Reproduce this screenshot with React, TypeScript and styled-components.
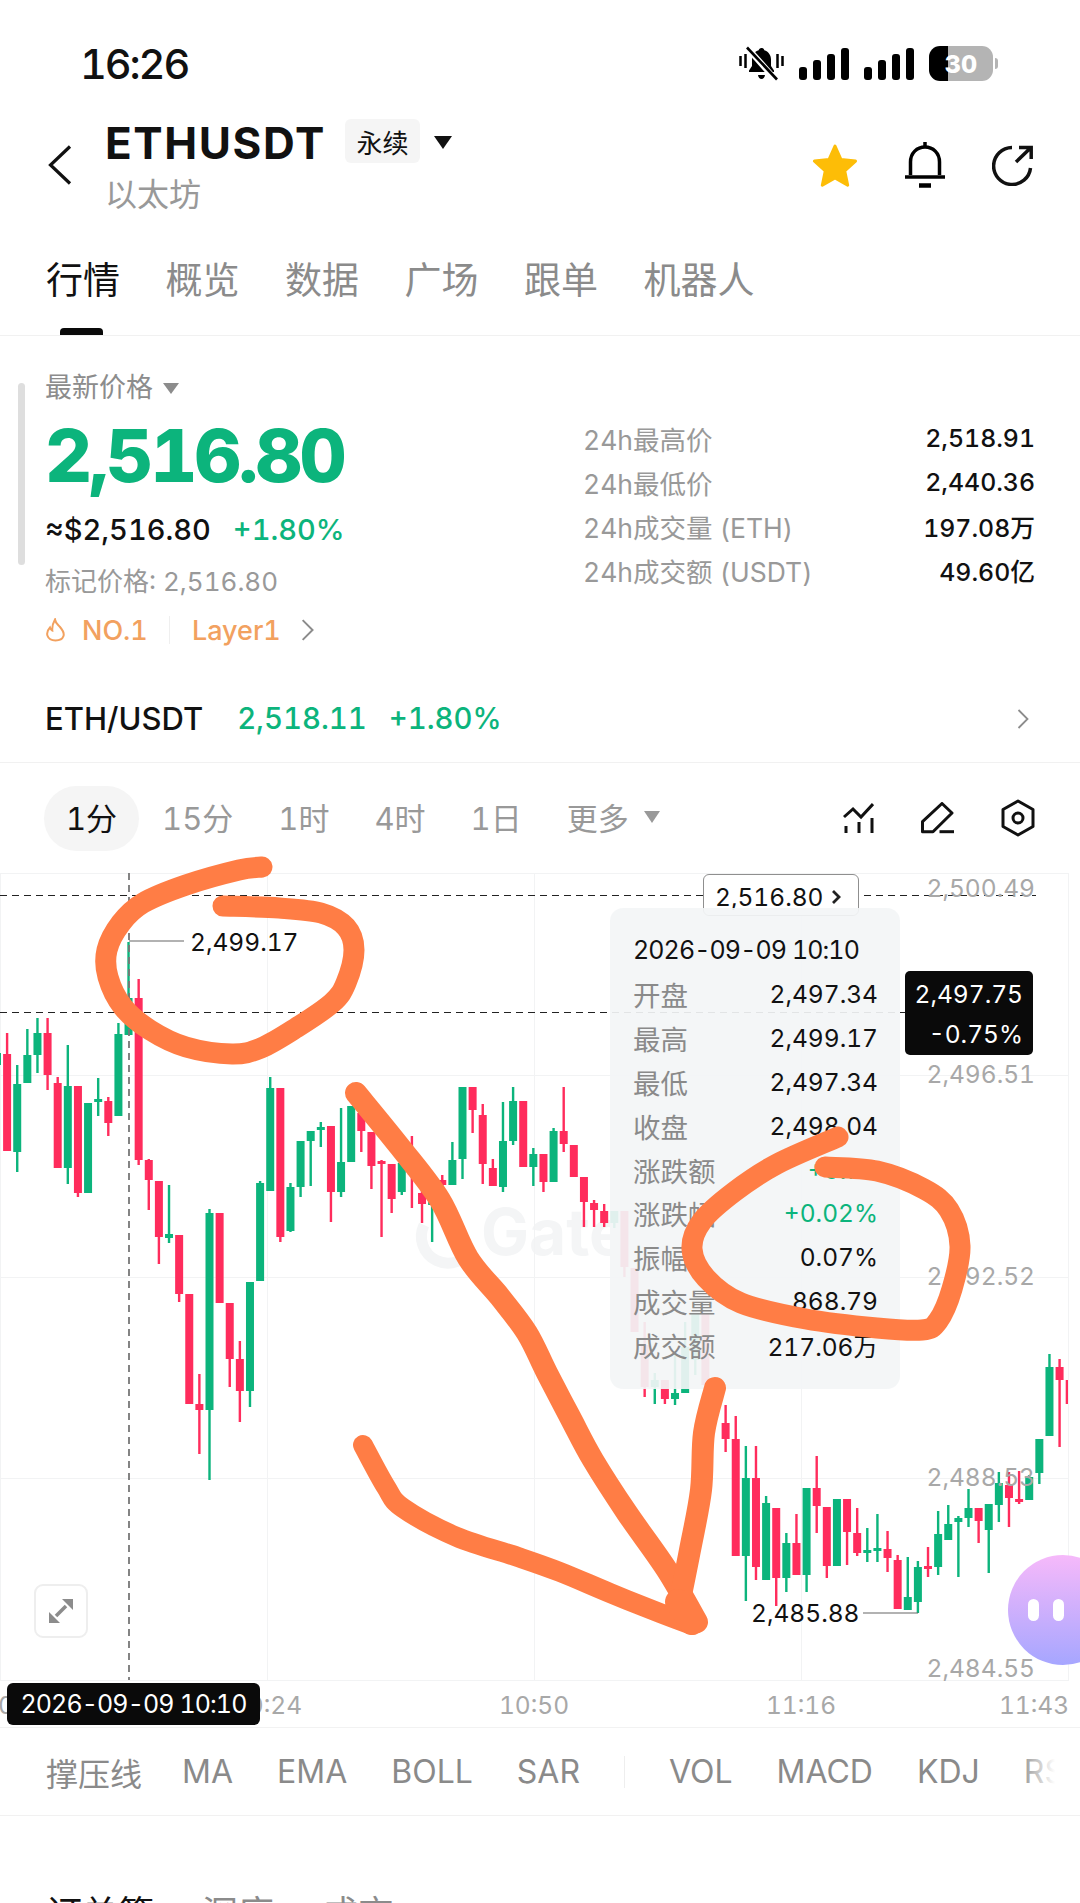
import React from 'react';
import styled, { createGlobalStyle } from 'styled-components';

const GREEN = '#0cb47c';
const RED = '#ff2c5c';
const ORANGE = '#ff7d45';
const FONT = 'Inter, "Noto Sans CJK SC", sans-serif';
const CHART_TOP = 863;

const Global = createGlobalStyle`
  html, body { margin: 0; padding: 0; background: #fff; }
  body { font-family: ${FONT}; color: #111; font-variant-numeric: tabular-nums; }
  * { box-sizing: border-box; }
`;

const Page = styled.div`
  width: 1080px;
  height: 1903px;
  overflow: hidden;
  background: #fff;
  display: flex;
  flex-direction: column;
`;

/* ---------- status bar ---------- */
const StatusBar = styled.div`
  height: 110px;
  flex: none;
  padding: 17px 87px 0 80px;
  display: flex;
  align-items: center;
  justify-content: space-between;
`;
const Clock = styled.div`
  font-size: 41.5px;
  line-height: 44px;
  font-weight: 500;
  letter-spacing: -2.1px;
`;
const StatusIcons = styled.div`
  display: flex;
  align-items: center;
  gap: 15px;
`;
const Battery = styled.div`
  width: 64px;
  height: 35px;
  border-radius: 11px;
  background: linear-gradient(90deg, #000 30%, #b4b4b4 30%);
  color: #fff;
  font-size: 25px;
  font-weight: 800;
  display: flex;
  align-items: center;
  justify-content: center;
  position: relative;
  &::after {
    content: '';
    position: absolute;
    right: -5px;
    top: 12px;
    width: 3px;
    height: 11px;
    border-radius: 0 3px 3px 0;
    background: #b4b4b4;
  }
`;

/* ---------- header ---------- */
const Header = styled.div`
  height: 110px;
  flex: none;
  display: flex;
  align-items: center;
  padding: 0 47px 0 48px;
`;
const TitleCol = styled.div`
  margin-left: 33px;
  display: flex;
  flex-direction: column;
  gap: 13px;
  margin-top: 2px;
`;
const TitleRow = styled.div`
  display: flex;
  align-items: center;
  height: 44px;
`;
const Symbol = styled.div`
  font-size: 44px;
  font-weight: 700;
  line-height: 44px;
  letter-spacing: 1.6px;
`;
const KindTag = styled.div`
  margin: -3px 0 0 19px;
  width: 75px;
  height: 44px;
  border-radius: 6px;
  background: #f5f5f5;
  font-size: 26px;
  display: flex;
  align-items: center;
  justify-content: center;
`;
const Triangle = styled.i<{ $w: number; $h: number; $color: string; $ml: number }>`
  display: block;
  flex: none;
  margin-left: ${p => p.$ml}px;
  width: 0;
  height: 0;
  border-left: ${p => p.$w / 2}px solid transparent;
  border-right: ${p => p.$w / 2}px solid transparent;
  border-top: ${p => p.$h}px solid ${p => p.$color};
`;
const SubTitle = styled.div`
  font-size: 32px;
  line-height: 34px;
  color: #999;
`;
const HeaderActions = styled.div`
  margin-left: auto;
  display: flex;
  align-items: center;
  gap: 47px;
`;

/* ---------- main tabs ---------- */
const TabBar = styled.div`
  height: 116px;
  flex: none;
  display: flex;
  align-items: flex-start;
  gap: 45.5px;
  padding: 42px 0 0 46px;
  border-bottom: 1px solid #f1f1f1;
`;
const Tab = styled.div<{ $active?: boolean }>`
  position: relative;
  font-size: 37px;
  line-height: 37px;
  color: ${p => (p.$active ? '#111' : '#8b8b8b')};
  height: 73px;
  ${p =>
    p.$active &&
    `&::after {
      content: '';
      position: absolute;
      left: 14px;
      bottom: 0;
      width: 43px;
      height: 7px;
      border-radius: 4px 4px 0 0;
      background: #0a0a0a;
    }`}
`;

/* ---------- info ---------- */
const Info = styled.div`
  height: 339px;
  flex: none;
  display: flex;
  position: relative;
  padding-left: 45px;
`;
const ScrollThumb = styled.div`
  position: absolute;
  left: 18px;
  top: 47px;
  width: 7px;
  height: 182px;
  border-radius: 4px;
  background: #dedede;
`;
const PriceCol = styled.div`
  width: 538px;
  flex: none;
  padding-top: 34px;
  display: flex;
  flex-direction: column;
`;
const PriceLabel = styled.div`
  display: flex;
  align-items: center;
  font-size: 27px;
  line-height: 36px;
  color: #8c8c8c;
`;
const BigPrice = styled.div`
  margin-top: 8px;
  font-size: 73px;
  line-height: 84px;
  font-weight: 800;
  letter-spacing: -2.9px;
  color: ${GREEN};
`;
const ApproxRow = styled.div`
  margin-top: 14px;
  display: flex;
  gap: 22px;
  font-size: 29px;
  line-height: 36px;
  font-weight: 500;
`;
const GreenText = styled.span`
  color: ${GREEN};
`;
const MarkPrice = styled.div`
  margin-top: 16px;
  font-size: 26px;
  line-height: 36px;
  color: #999;
`;
const RankRow = styled.div`
  margin-top: 10px;
  height: 40px;
  display: flex;
  align-items: center;
  font-size: 27px;
  font-weight: 500;
  color: #f2a15f;
`;
const RankText = styled.span`
  margin-left: 16px;
`;
const RankDivider = styled.span`
  width: 1px;
  height: 28px;
  margin: 0 22px 0 21px;
  background: #efefef;
`;
const RankChevron = styled.span`
  margin-left: 20px;
  display: flex;
`;
const StatsCol = styled.div`
  flex: 1;
  padding: 80px 45px 0 0;
`;
const StatRow = styled.div`
  height: 44px;
  display: flex;
  align-items: center;
  justify-content: space-between;
  font-size: 26.5px;
`;
const StatLabel = styled.span`
  color: #999;
`;
const StatValue = styled.span`
  color: #111;
  font-size: 24.8px;
  font-weight: 500;
`;

/* ---------- spot row ---------- */
const SpotRow = styled.div`
  height: 88px;
  flex: none;
  display: flex;
  align-items: center;
  gap: 22px;
  padding: 0 51px 0 45px;
  border-bottom: 1px solid #f1f1f1;
  font-size: 29.3px;
  font-weight: 500;
`;
const SpotName = styled.span`
  font-size: 31px;
  margin-right: 12px;
`;
const SpotChevron = styled.span`
  margin-left: auto;
  display: flex;
`;

/* ---------- period bar ---------- */
const PeriodBar = styled.div`
  height: 100px;
  flex: none;
  padding: 10px 45px 0 44px;
  display: flex;
  align-items: center;
  gap: 1px;
`;
const Period = styled.div<{ $active?: boolean }>`
  height: 65px;
  padding: 0 22px 3px;
  display: flex;
  align-items: center;
  font-size: 31px;
  border-radius: 33px;
  background: ${p => (p.$active ? '#f5f5f5' : 'transparent')};
  color: ${p => (p.$active ? '#111' : '#999')};
`;
const ChartTools = styled.div`
  margin-left: auto;
  display: flex;
  align-items: center;
  gap: 47px;
`;

/* ---------- chart ---------- */
const Chart = styled.div`
  height: 865px;
  flex: none;
  position: relative;
  border-bottom: 1px solid #f2f2f2;
`;
const ChartLayer = styled.svg<{ $front?: boolean }>`
  position: absolute;
  left: 0;
  top: 0;
  overflow: visible;
  z-index: ${p => (p.$front ? 5 : 0)};
  pointer-events: none;
`;
const Watermark = styled.div`
  position: absolute;
  left: 481px;
  top: ${1232 - CHART_TOP}px;
  transform: translateY(-50%);
  font-size: 64px;
  font-weight: 700;
  line-height: 64px;
  color: #f4f5f6;
`;
const AxisPrice = styled.div<{ $y: number }>`
  position: absolute;
  right: 45px;
  top: ${p => p.$y - CHART_TOP}px;
  transform: translateY(-50%);
  font-size: 24.5px;
  color: #a8a8a8;
  line-height: 30px;
`;
const AxisTime = styled.div<{ $x: number }>`
  position: absolute;
  left: ${p => p.$x}px;
  top: ${1705 - CHART_TOP}px;
  transform: translate(-50%, -50%);
  font-size: 24.5px;
  color: #a8a8a8;
  line-height: 30px;
`;
const ExtremeLabel = styled.div<{ $x: number; $y: number }>`
  position: absolute;
  left: ${p => p.$x}px;
  top: ${p => p.$y - CHART_TOP}px;
  transform: translateY(-50%);
  font-size: 24.5px;
  line-height: 30px;
  color: #111;
`;
const LastPriceTag = styled.div`
  position: absolute;
  left: 703px;
  top: ${874 - CHART_TOP}px;
  width: 156px;
  height: 42px;
  background: #fff;
  border: 1px solid #8f8f8f;
  border-radius: 6px;
  display: flex;
  align-items: center;
  padding: 3px 0 0 11px;
  gap: 8px;
  font-size: 24.5px;
  line-height: 36px;
  z-index: 1;
`;
const Tooltip = styled.div`
  position: absolute;
  left: 610px;
  top: ${908 - CHART_TOP}px;
  width: 290px;
  height: 481px;
  padding: 21px 22px 0 23px;
  border-radius: 13px;
  background: rgba(243, 245, 246, 0.92);
  z-index: 2;
`;
const TooltipDate = styled.div`
  font-size: 25px;
  line-height: 43px;
  letter-spacing: -0.9px;
  color: #111;
`;
const TooltipRow = styled.div`
  display: flex;
  justify-content: space-between;
  align-items: center;
  height: 43.9px;
  font-size: 24.5px;
`;
const TooltipKey = styled.span`
  color: #8a8a8a;
  font-size: 27.5px;
`;
const TooltipVal = styled.span<{ $green?: boolean }>`
  color: ${p => (p.$green ? GREEN : '#111')};
`;
const CrossPrice = styled.div`
  position: absolute;
  left: 905px;
  top: ${971 - CHART_TOP}px;
  width: 128px;
  height: 84px;
  padding: 3px 10px 0 0;
  border-radius: 5px;
  background: #0a0a0a;
  color: #fff;
  font-size: 24.5px;
  line-height: 40px;
  text-align: right;
  z-index: 3;
`;
const CrossDate = styled.div`
  position: absolute;
  left: 7px;
  top: ${1683 - CHART_TOP}px;
  width: 253px;
  height: 42px;
  border-radius: 6px;
  background: #0a0a0a;
  color: #fff;
  font-size: 25px;
  letter-spacing: -0.9px;
  display: flex;
  align-items: center;
  justify-content: center;
  z-index: 3;
`;
const ExpandButton = styled.div`
  position: absolute;
  left: 34px;
  top: ${1584 - CHART_TOP}px;
  width: 54px;
  height: 54px;
  border: 2px solid #eeeeee;
  border-radius: 9px;
  background: #fff;
  display: flex;
  align-items: center;
  justify-content: center;
`;
const Assistant = styled.div`
  position: absolute;
  left: 1008px;
  top: ${1555 - CHART_TOP}px;
  width: 110px;
  height: 110px;
  border-radius: 50%;
  background: linear-gradient(180deg, #f6b9fa 0%, #a6a6ff 100%);
  display: flex;
  align-items: center;
  gap: 14px;
  padding: 0 0 0 20px;
  z-index: 4;
`;
const AssistantEye = styled.i`
  display: block;
  width: 11px;
  height: 22px;
  border-radius: 6px;
  background: #fff;
`;

/* ---------- indicators ---------- */
const IndicatorBar = styled.div`
  height: 88px;
  flex: none;
  position: relative;
  display: flex;
  align-items: center;
  gap: 44px;
  padding-left: 46px;
  overflow: hidden;
  white-space: nowrap;
  border-bottom: 1px solid #f1f1f1;
  font-size: 32px;
  color: #8a8a8a;
  &::after {
    content: '';
    position: absolute;
    right: 0;
    top: 0;
    bottom: 1px;
    width: 62px;
    background: linear-gradient(90deg, rgba(255, 255, 255, 0), #fff 60%);
  }
`;
const SupportLabel = styled.span`
  margin-right: -4px;
`;
const IndicatorDivider = styled.span`
  flex: none;
  width: 1px;
  height: 32px;
  background: #eeeeee;
`;

/* ---------- depth tabs ---------- */
const DepthTabs = styled.div`
  padding: 79px 0 0 46px;
  display: flex;
  gap: 48px;
  font-size: 36px;
  line-height: 38px;
`;
const DepthTab = styled.span<{ $active?: boolean }>`
  color: ${p => (p.$active ? '#111' : '#8b8b8b')};
`;

/* ---------- data ---------- */
type Candle = [number, number, number, number, 'g' | 'r'];
const CANDLES: Candle[] = [
  [1053, 1053, 1065, 1065, 'g'],
  [1033, 1054, 1151, 1151, 'r'],
  [1065, 1084, 1152, 1172, 'g'],
  [1029, 1055, 1083, 1083, 'g'],
  [1018, 1033, 1055, 1073, 'g'],
  [1018, 1033, 1075, 1090, 'r'],
  [1077, 1083, 1168, 1168, 'r'],
  [1045, 1086, 1168, 1184, 'g'],
  [1086, 1086, 1193, 1197, 'r'],
  [1103, 1103, 1193, 1193, 'g'],
  [1078, 1099, 1102, 1116, 'g'],
  [1097, 1101, 1123, 1136, 'r'],
  [1023, 1034, 1116, 1116, 'g'],
  [942, 998, 1035, 1035, 'g'],
  [979, 998, 1160, 1165, 'r'],
  [1159, 1160, 1180, 1210, 'r'],
  [1181, 1181, 1237, 1264, 'r'],
  [1185, 1234, 1238, 1243, 'g'],
  [1235, 1235, 1294, 1302, 'r'],
  [1294, 1294, 1404, 1404, 'r'],
  [1374, 1404, 1410, 1454, 'r'],
  [1209, 1213, 1410, 1480, 'g'],
  [1213, 1213, 1303, 1303, 'r'],
  [1303, 1303, 1359, 1387, 'r'],
  [1341, 1359, 1391, 1422, 'r'],
  [1282, 1282, 1391, 1407, 'g'],
  [1181, 1183, 1281, 1281, 'g'],
  [1077, 1088, 1191, 1191, 'g'],
  [1088, 1088, 1237, 1242, 'r'],
  [1183, 1187, 1231, 1232, 'g'],
  [1141, 1141, 1187, 1197, 'g'],
  [1131, 1131, 1141, 1186, 'g'],
  [1122, 1127, 1130, 1147, 'g'],
  [1126, 1126, 1192, 1222, 'r'],
  [1108, 1162, 1192, 1197, 'g'],
  [1106, 1106, 1162, 1162, 'g'],
  [1113, 1113, 1131, 1152, 'r'],
  [1132, 1132, 1166, 1189, 'r'],
  [1160, 1161, 1164, 1237, 'r'],
  [1164, 1164, 1199, 1213, 'r'],
  [1135, 1163, 1192, 1195, 'g'],
  [1136, 1165, 1175, 1208, 'r'],
  [1190, 1193, 1204, 1223, 'r'],
  [1190, 1195, 1205, 1242, 'g'],
  [1175, 1180, 1185, 1197, 'r'],
  [1142, 1160, 1185, 1185, 'g'],
  [1087, 1087, 1159, 1179, 'g'],
  [1087, 1087, 1110, 1133, 'r'],
  [1104, 1115, 1164, 1184, 'r'],
  [1159, 1168, 1186, 1186, 'r'],
  [1102, 1141, 1187, 1192, 'g'],
  [1087, 1101, 1141, 1145, 'g'],
  [1101, 1101, 1167, 1167, 'r'],
  [1148, 1154, 1167, 1186, 'g'],
  [1154, 1154, 1182, 1192, 'r'],
  [1128, 1131, 1182, 1182, 'g'],
  [1087, 1131, 1144, 1152, 'r'],
  [1145, 1145, 1177, 1177, 'r'],
  [1177, 1177, 1202, 1227, 'r'],
  [1200, 1203, 1210, 1227, 'r'],
  [1204, 1211, 1223, 1227, 'r'],
  [1211, 1211, 1223, 1228, 'g'],
  [1211, 1211, 1267, 1277, 'r'],
  [1268, 1268, 1332, 1332, 'r'],
  [1322, 1345, 1387, 1397, 'r'],
  [1373, 1380, 1387, 1404, 'g'],
  [1380, 1380, 1399, 1404, 'r'],
  [1353, 1393, 1399, 1405, 'g'],
  [1322, 1347, 1393, 1393, 'g'],
  [1313, 1313, 1360, 1375, 'g'],
  [1313, 1313, 1385, 1385, 'r'],
  [1380, 1385, 1405, 1420, 'r'],
  [1405, 1423, 1439, 1452, 'r'],
  [1416, 1439, 1556, 1556, 'r'],
  [1446, 1478, 1556, 1601, 'g'],
  [1446, 1478, 1567, 1580, 'r'],
  [1496, 1503, 1580, 1580, 'g'],
  [1508, 1508, 1578, 1606, 'r'],
  [1533, 1543, 1578, 1592, 'g'],
  [1514, 1543, 1575, 1575, 'r'],
  [1488, 1488, 1575, 1592, 'g'],
  [1456, 1488, 1506, 1533, 'r'],
  [1507, 1507, 1566, 1578, 'r'],
  [1499, 1499, 1566, 1566, 'g'],
  [1499, 1499, 1532, 1565, 'r'],
  [1508, 1533, 1553, 1556, 'r'],
  [1528, 1550, 1552, 1562, 'g'],
  [1514, 1548, 1550, 1562, 'g'],
  [1531, 1549, 1558, 1572, 'r'],
  [1555, 1560, 1609, 1609, 'r'],
  [1557, 1597, 1610, 1610, 'g'],
  [1561, 1567, 1602, 1613, 'g'],
  [1547, 1566, 1568, 1577, 'r'],
  [1511, 1534, 1567, 1575, 'g'],
  [1505, 1524, 1540, 1540, 'g'],
  [1516, 1518, 1522, 1577, 'g'],
  [1489, 1508, 1518, 1527, 'g'],
  [1508, 1508, 1521, 1543, 'r'],
  [1504, 1504, 1530, 1573, 'g'],
  [1472, 1483, 1505, 1522, 'g'],
  [1472, 1485, 1498, 1527, 'r'],
  [1471, 1499, 1501, 1504, 'r'],
  [1475, 1477, 1500, 1500, 'g'],
  [1439, 1439, 1473, 1484, 'g'],
  [1354, 1367, 1436, 1436, 'g'],
  [1359, 1367, 1380, 1447, 'r'],
  [1373, 1380, 1404, 1416, 'r'],
];

type Pt = [number, number];
const toPath = (pts: Pt[]) => {
  let d = `M${pts[0][0]} ${pts[0][1]}`;
  for (let i = 0; i < pts.length - 1; i++) {
    const p0 = pts[Math.max(0, i - 1)];
    const p1 = pts[i];
    const p2 = pts[i + 1];
    const p3 = pts[Math.min(pts.length - 1, i + 2)];
    const c1x = p1[0] + (p2[0] - p0[0]) / 6;
    const c1y = p1[1] + (p2[1] - p0[1]) / 6;
    const c2x = p2[0] - (p3[0] - p1[0]) / 6;
    const c2y = p2[1] - (p3[1] - p1[1]) / 6;
    d += `C${c1x} ${c1y} ${c2x} ${c2y} ${p2[0]} ${p2[1]}`;
  }
  return d;
};

const CIRCLE_ONE: Pt[] = [[262, 867], [239, 870], [186, 885], [143, 903], [121, 923], [107, 950], [108, 977], [123, 1007], [150, 1030], [186, 1047], [232, 1054], [261, 1048], [296, 1028], [332, 1003], [346, 983], [354, 950], [346, 927], [321, 913], [279, 908], [223, 906]];
const ARROW_SHAFT: Pt[] = [[356, 1093], [400, 1147], [440, 1200], [468, 1258], [500, 1297], [527, 1333], [547, 1373], [570, 1417], [593, 1460], [627, 1513], [667, 1570], [697, 1622]];
const ARROW_LEFT: Pt[] = [[363, 1445], [386, 1487], [403, 1508], [457, 1537], [518, 1557], [560, 1572], [610, 1593], [660, 1613], [692, 1625]];
const ARROW_RIGHT: Pt[] = [[680, 1600], [690, 1550], [701, 1490], [704, 1433], [715, 1388]];
const CIRCLE_TWO: Pt[] = [[838, 1137], [777, 1164], [734, 1192], [702, 1221], [692, 1249], [706, 1278], [741, 1303], [806, 1319], [877, 1328], [922, 1330], [938, 1321], [952, 1289], [960, 1246], [949, 1210], [924, 1189], [877, 1171], [825, 1167]];

const TOOLTIP_ROWS: { k: string; v: string; green?: boolean }[] = [
  { k: '开盘', v: '2,497.34' },
  { k: '最高', v: '2,499.17' },
  { k: '最低', v: '2,497.34' },
  { k: '收盘', v: '2,498.04' },
  { k: '涨跌额', v: '+0.70', green: true },
  { k: '涨跌幅', v: '+0.02%', green: true },
  { k: '振幅', v: '0.07%' },
  { k: '成交量', v: '868.79' },
  { k: '成交额', v: '217.06万' },
];
const STATS = [
  ['24h最高价', '2,518.91'],
  ['24h最低价', '2,440.36'],
  ['24h成交量 (ETH)', '197.08万'],
  ['24h成交额 (USDT)', '49.60亿'],
];
const MAIN_TABS = ['行情', '概览', '数据', '广场', '跟单', '机器人'];
const PERIODS = ['1分', '15分', '1时', '4时', '1日'];
const GRID_Y = [873, 1075, 1277, 1478, 1680];
const GRID_X = [0.5, 267.5, 534.5, 801.5, 1068.5];
const AXIS = [
  { y: 888, t: '2,500.49' },
  { y: 1074, t: '2,496.51' },
  { y: 1276, t: '2,492.52' },
  { y: 1477, t: '2,488.53' },
  { y: 1668, t: '2,484.55' },
];
const TIMES = [
  { x: 33, t: '09:58' },
  { x: 267, t: '10:24' },
  { x: 534, t: '10:50' },
  { x: 801, t: '11:16' },
  { x: 1034, t: '11:43' },
];

/* ---------- icons ---------- */
const MuteIcon = () => (
  <svg width="45" height="35" viewBox="0 0 45 35">
    <path d="M22.5 2c-1.6 0-2.6 1-2.8 2.3C15.600 5.600 13 9 13 13.500v6.500l-3 4.500v1.500h25v-1.500l-3-4.500v-6.500c0-4.500-2.600-7.900-6.700-9.200C25.100 3 24.100 2 22.500 2z" fill="#000" />
    <path d="M19 29h7c-.4 2.600-1.700 4-3.500 4s-3.100-1.400-3.500-4z" fill="#000" />
    <path d="M8 1.500 36 33" stroke="#fff" strokeWidth="6" />
    <path d="M8 1.500 38 33.500" stroke="#000" strokeWidth="2.600" />
    <path d="M1.500 10v10M6.500 8v14M38.500 8v14M43.500 10v10" stroke="#000" strokeWidth="2.500" />
  </svg>
);
const Signal = () => (
  <svg width="50" height="32" viewBox="0 0 50 32">
    <rect x="0" y="19" width="8" height="13" rx="3" fill="#000" />
    <rect x="14" y="12" width="8" height="20" rx="3" fill="#000" />
    <rect x="28" y="6" width="8" height="26" rx="3" fill="#000" />
    <rect x="42" y="0" width="8" height="32" rx="3" fill="#000" />
  </svg>
);
const BackIcon = () => (
  <svg width="24" height="40" viewBox="0 0 24 40" fill="none">
    <path d="M22 1.500 2.500 20 22 38.500" stroke="#111" strokeWidth="3.200" />
  </svg>
);
const StarIcon = () => (
  <svg width="46" height="44" viewBox="0 0 46 44">
    <path d="M23 3l6 13.500 14.500 1.600-10.800 9.800 3 14.300L23 35l-12.700 7.200 3-14.300L2.500 18.100 17 16.500z" fill="#fdbd07" stroke="#fdbd07" strokeWidth="3" strokeLinejoin="round" />
  </svg>
);
const BellIcon = () => (
  <svg width="40" height="46" viewBox="0 0 40 46" fill="none" stroke="#000">
    <path d="M20 0v5" strokeWidth="3.500" />
    <path d="M5.500 33V20C5.500 11 12 5 20 5s14.500 6 14.500 15v13" strokeWidth="3.500" />
    <path d="M0 35h40" strokeWidth="3.500" />
    <path d="M14 43.500h12" strokeWidth="4.500" />
  </svg>
);
const ShareIcon = () => (
  <svg width="41" height="41" viewBox="0 0 41 41" fill="none" stroke="#111" strokeWidth="3.500">
    <path d="M20 2.500A18.500 18.500 0 1 0 38.500 23" />
    <path d="M24 17 38.500 3M27 2.500h12.200V14" />
  </svg>
);
const Flame = () => (
  <svg width="21" height="24" viewBox="0 0 21 24" fill="none" stroke="#f2a15f" strokeWidth="2">
    <path d="M10 1.500c.5 3.500 2.500 4.500 5 7.500 3 3.500 4.500 6 3.500 9-1 3-4.500 4.500-8 4.500s-7-1.700-8-4.700c-1-3 .2-5.800 2.500-8.300.5 1.500 1.200 2.500 2.300 3C7 9 8 5 10 1.500z" />
  </svg>
);
const Chevron = ({ color, h }: { color: string; h: number }) => (
  <svg width={h * 0.6} height={h} viewBox="0 0 12 20" fill="none">
    <path d="M1.500 1 10.500 10 1.500 19" stroke={color} strokeWidth="1.800" />
  </svg>
);
const IndicatorIcon = () => (
  <svg width="31" height="30" viewBox="0 0 31 30" fill="none" stroke="#111" strokeWidth="3">
    <path d="M1 14 10 6l8 8L30 1" />
    <path d="M3 23v7M16 19v11M29 15v15" />
  </svg>
);
const PencilIcon = () => (
  <svg width="33" height="32" viewBox="0 0 33 32" fill="none" stroke="#111" strokeWidth="3">
    <path d="M21 1.500 31 11 12 29.700H1.500V19.700z" strokeLinejoin="round" />
    <path d="M18.500 29.700H33" />
  </svg>
);
const HexIcon = () => (
  <svg width="34" height="38" viewBox="0 0 34 38" fill="none" stroke="#111" strokeWidth="3">
    <path d="M17 2 32 10.500v17L17 36 2 27.500v-17z" strokeLinejoin="round" />
    <circle cx="17" cy="19" r="5" />
  </svg>
);
const ExpandIcon = () => (
  <svg width="26" height="26" viewBox="0 0 26 26" fill="#8c8c8c" stroke="none">
    <path d="M14 1h11v11z" />
    <path d="M1 14v11h11z" />
    <path d="M8 18 18 8" stroke="#8c8c8c" strokeWidth="3.500" />
  </svg>
);
const SmallChevron = () => (
  <svg width="11" height="16" viewBox="0 0 11 16" fill="none">
    <path d="M2 2l6 6-6 6" stroke="#222" strokeWidth="2.800" />
  </svg>
);

const candleX = (i: number) => 7.1 + 10.12 * (i - 1);

const CandleLayer = () => (
  <ChartLayer width="1080" height="865" viewBox={`0 ${CHART_TOP} 1080 865`}>
    <defs>
      <clipPath id="plot">
        <rect x="0" y="873" width="1068" height="807" />
      </clipPath>
    </defs>
    <path d="M424 1225A26 26 0 0 0 472 1248" fill="none" stroke="#f4f5f6" strokeWidth="11" />
    {GRID_Y.map(y => (
      <line key={y} x1="0" x2="1069" y1={y + 0.5} y2={y + 0.5} stroke="#f2f3f4" />
    ))}
    {GRID_X.map(x => (
      <line key={x} x1={x} x2={x} y1="873" y2="1680" stroke="#f2f3f4" />
    ))}
    <g clipPath="url(#plot)">
      {CANDLES.map(([hi, top, bottom, lo, c], i) => {
        const x = candleX(i);
        const fill = c === 'g' ? GREEN : RED;
        return (
          <g key={i} fill={fill}>
            <rect x={x - 1.2} y={hi} width="2.4" height={lo - hi} />
            <rect x={x - 4} y={top} width="8" height={Math.max(bottom - top, 3)} />
          </g>
        );
      })}
    </g>
    <line x1="0" x2="1036" y1="895.5" y2="895.5" stroke="#222" strokeWidth="1.200" strokeDasharray="7 5" />
    <line x1="0" x2="906" y1="1012.5" y2="1012.5" stroke="#222" strokeWidth="1.200" strokeDasharray="7 5" />
    <line x1="129" x2="129" y1="873" y2="1680" stroke="#777" strokeWidth="1.800" strokeDasharray="7 5" />
    <line x1="129" x2="184" y1="941" y2="941" stroke="#666" strokeWidth="1.200" />
    <line x1="863" x2="918" y1="1613" y2="1613" stroke="#666" strokeWidth="1.200" />
  </ChartLayer>
);

const Annotations = () => (
  <ChartLayer $front width="1080" height="865" viewBox={`0 ${CHART_TOP} 1080 865`} fill="none" stroke={ORANGE} strokeLinecap="round" strokeLinejoin="round">
    <path d={toPath(CIRCLE_ONE)} strokeWidth="21" />
    <path d={toPath(ARROW_SHAFT)} strokeWidth="22" />
    <path d={toPath(ARROW_LEFT)} strokeWidth="20" />
    <path d={toPath(ARROW_RIGHT)} strokeWidth="22" />
    <path d="M678 1602 692 1622" strokeWidth="26" />
    <path d={toPath(CIRCLE_TWO)} strokeWidth="21" />
  </ChartLayer>
);

export default function App() {
  return (
    <Page>
      <Global />
      <StatusBar>
        <Clock>16:26</Clock>
        <StatusIcons>
          <MuteIcon />
          <Signal />
          <Signal />
          <Battery>30</Battery>
        </StatusIcons>
      </StatusBar>

      <Header>
        <BackIcon />
        <TitleCol>
          <TitleRow>
            <Symbol>ETHUSDT</Symbol>
            <KindTag>永续</KindTag>
            <Triangle $w={18} $h={13} $color="#111" $ml={14} />
          </TitleRow>
          <SubTitle>以太坊</SubTitle>
        </TitleCol>
        <HeaderActions>
          <StarIcon />
          <BellIcon />
          <ShareIcon />
        </HeaderActions>
      </Header>

      <TabBar>
        {MAIN_TABS.map((t, i) => (
          <Tab key={t} $active={i === 0}>
            {t}
          </Tab>
        ))}
      </TabBar>

      <Info>
        <ScrollThumb />
        <PriceCol>
          <PriceLabel>
            最新价格
            <Triangle $w={17} $h={11} $color="#8c8c8c" $ml={10} />
          </PriceLabel>
          <BigPrice>2,516.80</BigPrice>
          <ApproxRow>
            <span>≈$2,516.80</span>
            <GreenText>+1.80%</GreenText>
          </ApproxRow>
          <MarkPrice>标记价格: 2,516.80</MarkPrice>
          <RankRow>
            <Flame />
            <RankText>NO.1</RankText>
            <RankDivider />
            <span>Layer1</span>
            <RankChevron>
              <Chevron color="#8c8c8c" h={22} />
            </RankChevron>
          </RankRow>
        </PriceCol>
        <StatsCol>
          {STATS.map(([k, v]) => (
            <StatRow key={k}>
              <StatLabel>{k}</StatLabel>
              <StatValue>{v}</StatValue>
            </StatRow>
          ))}
        </StatsCol>
      </Info>

      <SpotRow>
        <SpotName>ETH/USDT</SpotName>
        <GreenText>2,518.11</GreenText>
        <GreenText>+1.80%</GreenText>
        <SpotChevron>
          <Chevron color="#8c8c8c" h={20} />
        </SpotChevron>
      </SpotRow>

      <PeriodBar>
        {PERIODS.map((p, i) => (
          <Period key={p} $active={i === 0}>
            {p}
          </Period>
        ))}
        <Period>
          更多
          <Triangle $w={17} $h={12} $color="#999" $ml={15} />
        </Period>
        <ChartTools>
          <IndicatorIcon />
          <PencilIcon />
          <HexIcon />
        </ChartTools>
      </PeriodBar>

      <Chart>
        <Watermark>Gate</Watermark>
        <CandleLayer />
        {AXIS.map(a => (
          <AxisPrice key={a.t} $y={a.y}>
            {a.t}
          </AxisPrice>
        ))}
        {TIMES.map(t => (
          <AxisTime key={t.t} $x={t.x}>
            {t.t}
          </AxisTime>
        ))}
        <ExtremeLabel $x={190} $y={942}>
          2,499.17
        </ExtremeLabel>
        <ExtremeLabel $x={751} $y={1613}>
          2,485.88
        </ExtremeLabel>
        <LastPriceTag>
          2,516.80
          <SmallChevron />
        </LastPriceTag>
        <Tooltip>
          <TooltipDate>2026-09-09 10:10</TooltipDate>
          {TOOLTIP_ROWS.map(r => (
            <TooltipRow key={r.k}>
              <TooltipKey>{r.k}</TooltipKey>
              <TooltipVal $green={r.green}>{r.v}</TooltipVal>
            </TooltipRow>
          ))}
        </Tooltip>
        <CrossPrice>
          2,497.75
          <br />
          -0.75%
        </CrossPrice>
        <CrossDate>2026-09-09 10:10</CrossDate>
        <ExpandButton>
          <ExpandIcon />
        </ExpandButton>
        <Assistant>
          <AssistantEye />
          <AssistantEye />
        </Assistant>
        <Annotations />
      </Chart>

      <IndicatorBar>
        <SupportLabel>撑压线</SupportLabel>
        <span>MA</span>
        <span>EMA</span>
        <span>BOLL</span>
        <span>SAR</span>
        <IndicatorDivider />
        <span>VOL</span>
        <span>MACD</span>
        <span>KDJ</span>
        <span>RSI</span>
      </IndicatorBar>

      <DepthTabs>
        <DepthTab $active>订单簿</DepthTab>
        <DepthTab>深度</DepthTab>
        <DepthTab>成交</DepthTab>
      </DepthTabs>
    </Page>
  );
}
